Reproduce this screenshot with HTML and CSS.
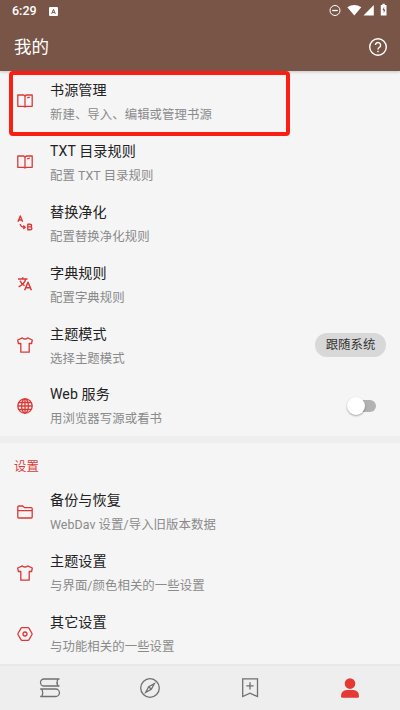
FILE: index.html
```html
<!DOCTYPE html>
<html lang="zh-CN">
<head>
<meta charset="utf-8">
<title>我的</title>
<link rel="stylesheet" href="styles.css">
</head>
<body>
<svg class="defs" width="0" height="0">
  <symbol id="book" viewBox="0 0 16 16"><path d="M8 3.2 6.8 2H.8v11.3h5.8L8 14l1.4-.7h5.8V2h-6zM8 3.2V14M10.2 4.8l2.6-.7"/></symbol>
  <symbol id="shirt" viewBox="0 0 16 16"><path d="M5.4.9Q8 3.2 10.6.9L15.3 3 14.6 6.5 12.2 6.3V15.2H3.8V6.3L1.4 6.5.7 3z"/></symbol>
</svg>
<div class="app">
  <header class="header">
    <div class="status">
      <span class="time">6:29</span>
      <svg class="badge" width="9" height="9" viewBox="0 0 9 9"><rect width="9" height="9" rx="1" fill="#fff"/><path d="M2.7 6.8 4.5 2.4l1.8 4.4M3.4 5.4h2.2" fill="none" stroke="#795548"/></svg>
      <svg class="indicators" width="60" height="14" viewBox="0 0 60 14">
        <circle cx="6" cy="7.5" r="5" fill="none" stroke="#fff"/><path d="M3.2 7.5h5.6" stroke="#fff" stroke-width="1.3"/>
        <path d="M18.3 4.2Q25.3-.3 32.3 4.2L25.3 12.5zM44.8 2v10.5H34.5zM51.8 2h1.6V.8h2.4V2h1.7v10.5h-5.7z" fill="#fff"/>
        <path d="m55.2 3.8-1.8 3.5h1.3v3l1.7-3.8h-1.3z" fill="#795548"/>
      </svg>
    </div>
    <div class="toolbar">
      <h1>我的</h1>
      <svg width="20" height="20" viewBox="0 0 20 20" fill="none" stroke="#fff" stroke-width="1.4"><circle cx="10" cy="10" r="8.3"/><path d="M7.4 8.1a2.6 2.6 0 1 1 4.3 2C10.5 11 10 11.3 10 12.4M10 13.8v1.5"/></svg>
    </div>
  </header>
  <main class="list">
    <div class="row marked"><svg class="icon"><use href="#book"/></svg><div class="copy"><h2>书源管理</h2><p>新建、导入、编辑或管理书源</p></div></div>
    <div class="row"><svg class="icon"><use href="#book"/></svg><div class="copy"><h2>TXT 目录规则</h2><p>配置 TXT 目录规则</p></div></div>
    <div class="row"><svg class="icon" viewBox="0 0 16 16"><path d="M1 6.8 3.3 1l2.3 5.8M1.8 5h3M3.2 9.2Q4 12.4 7.8 12.3M6.3 10.6 8.2 12.3 6.3 14M10.8 9.2v5.6h2.4q1.7 0 1.7-1.6 0-1.2-1.5-1.3 1.2-.1 1.2-1.3 0-1.4-1.5-1.4zM10.8 11.9h2.7" stroke-width="1.4"/></svg><div class="copy"><h2>替换净化</h2><p>配置替换净化规则</p></div></div>
    <div class="row"><svg class="icon" viewBox="0 0 16 16"><path d="M1 3.1h9.5M5.7 1.2v1.9M8.7 3.1Q7.6 7.7 1.6 10.8M3 4.8Q4.4 8 7.6 9.6M7.6 14.2 11 6.2l3.4 8M8.7 11.7h4.6" stroke-width="1.5"/></svg><div class="copy"><h2>字典规则</h2><p>配置字典规则</p></div></div>
    <div class="row"><svg class="icon"><use href="#shirt"/></svg><div class="copy"><h2>主题模式</h2><p>选择主题模式</p></div><button class="chip">跟随系统</button></div>
    <div class="row"><svg class="icon" viewBox="0 0 16 16"><circle cx="8" cy="8" r="7.2"/><ellipse cx="8" cy="8" rx="3.4" ry="7.2"/><path d="M8 .8v14.4M.8 8h14.4M1.8 4.5h12.4M1.8 11.5h12.4"/></svg><div class="copy"><h2>Web 服务</h2><p>用浏览器写源或看书</p></div><span class="switch"><span class="knob"></span></span></div>
    <div class="divider"></div>
    <h3 class="section">设置</h3>
    <div class="row"><svg class="icon" viewBox="0 0 16 16"><path d="M.8 13V3q0-1 1-1h4L7.4 3.6h6.8q1 0 1 1V13q0 1-1 1H1.8q-1 0-1-1zM.8 6.6h14.4"/></svg><div class="copy"><h2>备份与恢复</h2><p>WebDav 设置/导入旧版本数据</p></div></div>
    <div class="row"><svg class="icon"><use href="#shirt"/></svg><div class="copy"><h2>主题设置</h2><p>与界面/颜色相关的一些设置</p></div></div>
    <div class="row"><svg class="icon" viewBox="0 0 16 16"><path d="M4.9 1.6h6.2q.5 0 .8.5l3 5.2q.3.7 0 1.4l-3 5.2q-.3.5-.8.5H4.9q-.5 0-.8-.5l-3-5.2q-.3-.7 0-1.4l3-5.2q.3-.5.8-.5z"/><circle cx="8" cy="8" r="2"/></svg><div class="copy"><h2>其它设置</h2><p>与功能相关的一些设置</p></div></div>
  </main>
  <nav class="nav">
    <svg viewBox="0 0 22 22"><path d="M20.5 2H5a3.4 3.4 0 0 0 0 7h15.5M18.8 2q-1.7 3.5 0 7M1.2 12h15.5a3.7 3.7 0 0 1 0 7.5H1.2M2.9 12q1.7 3.7 0 7.5"/></svg>
    <svg viewBox="0 0 22 22"><circle cx="11" cy="11" r="9.3"/><path d="M15.3 6.7 12.3 12.3 6.7 15.3 9.7 9.7zM9.7 9.7l2.6 2.6"/></svg>
    <svg viewBox="0 0 22 22"><path d="M3.7 1.9h14.8v17.7L11 16.2l-7.3 3.4zM11 5.2v7.4M7.3 8.9h7.4"/></svg>
    <svg class="active" viewBox="0 0 22 22"><circle cx="11" cy="6.6" r="5.3"/><path d="M2 19.2q0-6 6-6.2h6q6 .2 6 6.2 0 1.6-1.5 1.6h-15q-1.5 0-1.5-1.6z"/></svg>
  </nav>
</div>
</body>
</html>
```
FILE: styles.css
```css
*, *::after { box-sizing: border-box; }
body, h1, h2, h3, p { margin: 0; font-weight: 400; }
body { font-family: Roboto, "Noto Sans CJK SC", sans-serif; background: #f5f5f5; }
.defs { position: absolute; }
.app { width: 400px; height: 710px; display: flex; flex-direction: column; overflow: hidden; }
.header { height: 71px; flex: none; background: #795548; color: #fff; box-shadow: 0 1px 3px #0003; }
.status { height: 22px; display: flex; align-items: center; padding: 0 9px 0 12px; }
.time { font-size: 12.5px; font-weight: 500; line-height: 22px; }
.badge { margin-left: 12px; }
.indicators { margin: -3px 0 0 auto; }
.status .indicators { width: 60px; margin-right: 2px; }
.toolbar { height: 49px; display: flex; align-items: center; justify-content: space-between; padding: 0 12px 0 14px; }
h1 { font-size: 17.5px; line-height: 24px; }
.list { flex: 1; min-height: 0; }
.row { height: 60.9px; display: flex; align-items: center; padding: 0 14px 0 17px; }
.marked { position: relative; }
.marked::after { content: ""; position: absolute; left: 9px; top: 0; width: 281px; height: 65px; border: 4px solid #fb1e12; border-radius: 4px; }
.icon { width: 16px; height: 16px; margin-right: 17px; flex: none; fill: none; stroke: #dc3836; stroke-width: 1.3; stroke-linejoin: round; }
.copy { flex: 1; padding-top: 2px; white-space: nowrap; }
h2 { font-size: 14.1px; line-height: 24px; letter-spacing: .08px; color: #222; }
p { font-size: 12.4px; line-height: 25px; letter-spacing: .06px; color: #8a8a8a; }
.chip { width: 71px; height: 24px; padding: 0; border: 0; border-radius: 12px; background: #d8d8d8; color: #333; font: 12.4px/24px Roboto, "Noto Sans CJK SC", sans-serif; }
.switch { width: 26px; height: 12px; margin-right: 10px; border-radius: 6px; background: #b2b2b2; }
.knob { display: block; width: 18px; height: 18px; margin: -3px 0 0 -3px; border-radius: 50%; background: #fff; box-shadow: 0 1px 2px #0005; }
.divider { height: 7px; background: #eee; }
.section { height: 38px; padding: 11px 14px 0; font-size: 12.4px; line-height: 25px; color: #dc3c3a; }
.nav { height: 46px; flex: none; display: grid; grid-template-columns: repeat(4, 1fr); place-items: center; background: #eee; border-top: 2px solid #e8e8e8; }
.nav svg { width: 22px; height: 22px; fill: none; stroke: #707070; stroke-width: 1.3; }
.nav .active { fill: #e53935; stroke: none; }
```
